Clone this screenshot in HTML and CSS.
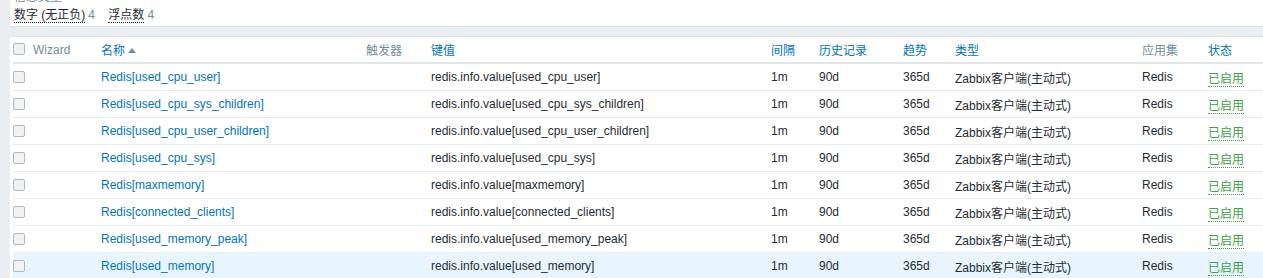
FILE: index.html
```html
<!DOCTYPE html>
<html>
<head>
    <meta charset="UTF-8">
    <title>监控项</title>
    <link rel="stylesheet" href="styles.css">
</head>
<body>
    <div class="filter">
        <div class="subtitle">信息类型</div>
        <div class="tags">
            <a class="tag">数字 (无正负)</a><span class="count">4</span>
            <a class="tag">浮点数</a><span class="count">4</span>
        </div>
    </div>
    <div class="list">
        <table>
            <colgroup>
                <col style="width:20px"><col style="width:68px"><col style="width:265px"><col style="width:65px">
                <col style="width:340px"><col style="width:48px"><col style="width:84px"><col style="width:52px">
                <col style="width:187px"><col style="width:66px"><col>
            </colgroup>
            <thead>
                <tr>
                    <th><span class="cb"></span></th>
                    <th class="off">Wizard</th>
                    <th><a>名称</a><span class="arrow"></span></th>
                    <th class="off">触发器</th>
                    <th><a>键值</a></th>
                    <th><a>间隔</a></th>
                    <th><a>历史记录</a></th>
                    <th><a>趋势</a></th>
                    <th><a>类型</a></th>
                    <th class="off">应用集</th>
                    <th><a>状态</a></th>
                </tr>
            </thead>
            <tbody>
                <tr><td><span class="cb"></span></td><td></td><td><a>Redis[used_cpu_user]</a></td><td></td><td>redis.info.value[used_cpu_user]</td><td>1m</td><td>90d</td><td>365d</td><td>Zabbix客户端(主动式)</td><td>Redis</td><td><a class="on">已启用</a></td></tr>
                <tr><td><span class="cb"></span></td><td></td><td><a>Redis[used_cpu_sys_children]</a></td><td></td><td>redis.info.value[used_cpu_sys_children]</td><td>1m</td><td>90d</td><td>365d</td><td>Zabbix客户端(主动式)</td><td>Redis</td><td><a class="on">已启用</a></td></tr>
                <tr><td><span class="cb"></span></td><td></td><td><a>Redis[used_cpu_user_children]</a></td><td></td><td>redis.info.value[used_cpu_user_children]</td><td>1m</td><td>90d</td><td>365d</td><td>Zabbix客户端(主动式)</td><td>Redis</td><td><a class="on">已启用</a></td></tr>
                <tr><td><span class="cb"></span></td><td></td><td><a>Redis[used_cpu_sys]</a></td><td></td><td>redis.info.value[used_cpu_sys]</td><td>1m</td><td>90d</td><td>365d</td><td>Zabbix客户端(主动式)</td><td>Redis</td><td><a class="on">已启用</a></td></tr>
                <tr><td><span class="cb"></span></td><td></td><td><a>Redis[maxmemory]</a></td><td></td><td>redis.info.value[maxmemory]</td><td>1m</td><td>90d</td><td>365d</td><td>Zabbix客户端(主动式)</td><td>Redis</td><td><a class="on">已启用</a></td></tr>
                <tr><td><span class="cb"></span></td><td></td><td><a>Redis[connected_clients]</a></td><td></td><td>redis.info.value[connected_clients]</td><td>1m</td><td>90d</td><td>365d</td><td>Zabbix客户端(主动式)</td><td>Redis</td><td><a class="on">已启用</a></td></tr>
                <tr><td><span class="cb"></span></td><td></td><td><a>Redis[used_memory_peak]</a></td><td></td><td>redis.info.value[used_memory_peak]</td><td>1m</td><td>90d</td><td>365d</td><td>Zabbix客户端(主动式)</td><td>Redis</td><td><a class="on">已启用</a></td></tr>
                <tr class="hover"><td><span class="cb"></span></td><td></td><td><a>Redis[used_memory]</a></td><td></td><td>redis.info.value[used_memory]</td><td>1m</td><td>90d</td><td>365d</td><td>Zabbix客户端(主动式)</td><td>Redis</td><td><a class="on">已启用</a></td></tr>
            </tbody>
        </table>
    </div>
</body>
</html>
```

FILE: styles.css
```css
body{margin: 0;background: #ebeef0;font-family: Arial, "Liberation Sans", "Noto Sans CJK SC", sans-serif;font-size: 12px;color: #1f2c33;overflow: hidden;}
.filter{margin-left: 10px;height: 26px;background: #fff;border-bottom: 1px solid #dfe4e7;overflow: hidden;}
.subtitle{margin-top: -10px;padding-left: 4px;height: 14px;line-height: 14px;color: #768d99;}
.tags{padding-left: 4px;line-height: 16px;margin-top: 3px;}
.tag{color: #1f2c33;border-bottom: 1px dotted #1f2c33;}
.count{color: #768d99;margin-left: 3px;margin-right: 10px;}
.list{margin-top: 9px;margin-left: 10px;background: #fff;border-top: 1px solid #dfe4e7;}
table{border-collapse: collapse;table-layout: fixed;width: 1250px;margin-left: 3px;}
th{height: 25px;text-align: left;font-weight: normal;padding: 0;border-bottom: 2px solid #dfe4e7;white-space: nowrap;}
th a{color: #0275b8;}
th.off{color: #768d99;}
td{height: 26px;padding: 0;border-bottom: 1px solid #ebeef0;white-space: nowrap;}
td a{color: #0275b8;}
td a.on{color: #429e47;border-bottom: 1px dotted #429e47;}
tr.hover td{background: #e8f5ff;}
.cb{display: inline-block;width: 10px;height: 10px;border: 1px solid #acbbc2;border-radius: 2px;background: #f2f2f2;vertical-align: middle;margin-top: -2px;}
.arrow{display: inline-block;width: 0;height: 0;border-left: 4px solid transparent;border-right: 4px solid transparent;border-bottom: 5px solid #768d99;margin-left: 3px;vertical-align: middle;margin-top: -3px;}
```
